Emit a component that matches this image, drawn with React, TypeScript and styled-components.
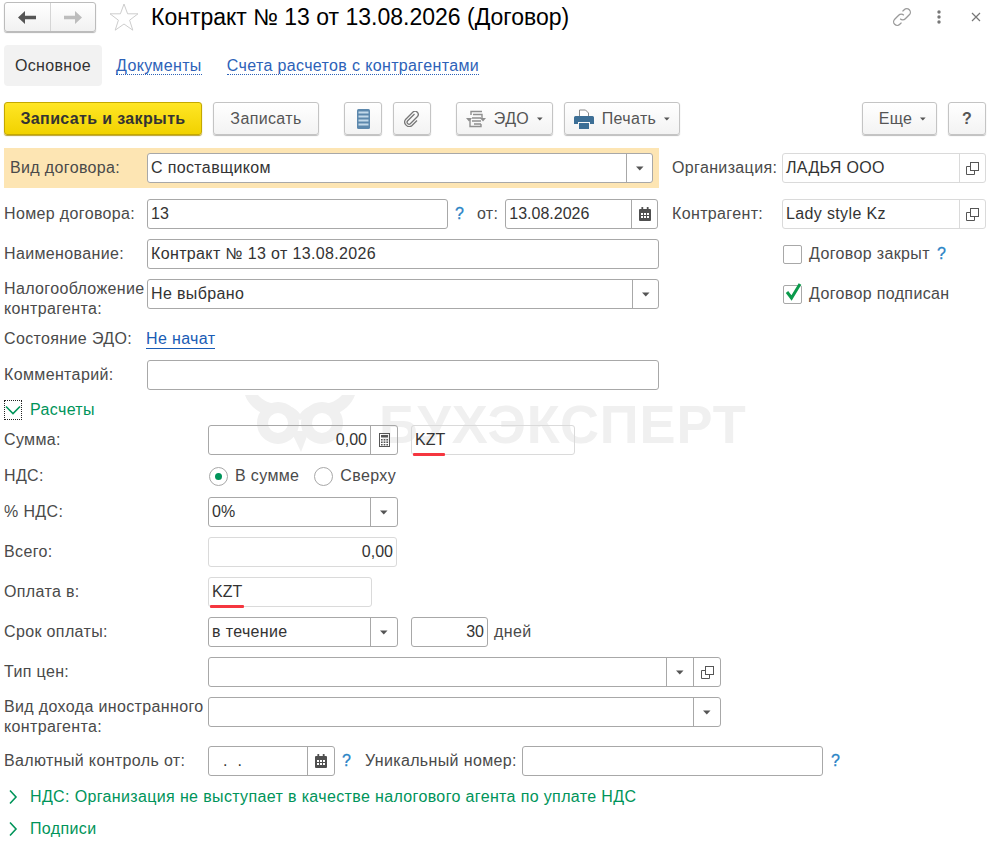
import React from "react";
import styled, { createGlobalStyle } from "styled-components";

const GlobalStyle = createGlobalStyle`
  html, body {
    margin: 0;
    padding: 0;
    background: #fff;
  }
  body {
    font-family: "Liberation Sans", Arial, sans-serif;
    font-size: 16px;
    letter-spacing: 0.36px;
    color: #333;
  }
`;

const Page = styled.div`
  position: relative;
  width: 990px;
  height: 847px;
  overflow: hidden;
  box-sizing: border-box;
  padding: 2px 4px 0;
`;

const Watermark = styled.div`
  position: absolute;
  left: 245px;
  top: 395px;
  display: flex;
  align-items: flex-start;
  gap: 21px;
  color: #f0f0f0;
  font-size: 54px;
  font-weight: 700;
  letter-spacing: 0.9px;
  line-height: 58px;
  white-space: nowrap;
`;

const Content = styled.div`
  position: relative;
  display: flex;
  flex-direction: column;
`;

const TitleBar = styled.header`
  display: flex;
  align-items: center;
  height: 30px;
`;

const NavGroup = styled.div`
  display: flex;
  width: 92px;
  height: 30px;
  box-sizing: border-box;
  border: 1px solid #bcbcbc;
  border-radius: 3px;
  background: linear-gradient(#fff, #f1f1f1);
  box-shadow: 0 1px 1px #b5b5b5;
`;

const NavButton = styled.div<{ $divider?: boolean }>`
  flex: 1;
  display: flex;
  align-items: center;
  justify-content: center;
  border-left: ${(p) => (p.$divider ? "1px solid #d5d5d5" : "none")};
`;

const Title = styled.h1`
  margin: 0 0 0 12px;
  font-size: 23px;
  font-weight: 400;
  letter-spacing: 0;
  color: #000;
  white-space: nowrap;
`;

const TitleActions = styled.div`
  margin-left: auto;
  display: flex;
  align-items: center;
  padding-right: 5px;
`;

const ActionIcon = styled.svg<{ $ml?: number }>`
  display: block;
  margin-left: ${(p) => p.$ml ?? 0}px;
`;

const StarWrap = styled.div`
  margin-left: 13px;
  display: flex;
`;

const Tabs = styled.nav`
  display: flex;
  align-items: center;
  height: 41px;
  margin-top: 13px;
`;

const ActiveTab = styled.div`
  display: flex;
  align-items: center;
  justify-content: center;
  width: 98px;
  height: 41px;
  border-radius: 4px;
  background: #f2f2f2;
  color: #333;
`;

const TabLink = styled.a<{ $gap: number }>`
  margin-left: ${(p) => p.$gap}px;
  color: #2d62b8;
  line-height: 17px;
  border-bottom: 1px dotted #2d62b8;
`;

const Toolbar = styled.div`
  display: flex;
  align-items: stretch;
  height: 33px;
  margin-top: 16px;
`;

const Button = styled.div<{ $w: number; $ml?: number; $pl?: number; $primary?: boolean }>`
  display: flex;
  align-items: center;
  justify-content: center;
  gap: 8px;
  box-sizing: border-box;
  width: ${(p) => p.$w}px;
  margin-left: ${(p) => p.$ml ?? 0}px;
  padding-left: ${(p) => p.$pl ?? 0}px;
  border: 1px solid ${(p) => (p.$primary ? "#c4a800" : "#c4c4c4")};
  border-radius: 3px;
  background: ${(p) =>
    p.$primary ? "linear-gradient(#ffe625, #f1d200)" : "linear-gradient(#fff, #f3f3f3)"};
  box-shadow: 0 1px 1px ${(p) => (p.$primary ? "#b8a030" : "#bdbdbd")};
  color: ${(p) => (p.$primary ? "#333" : "#555")};
  font-weight: ${(p) => (p.$primary ? 700 : 400)};
  white-space: nowrap;
`;

const TopForm = styled.div`
  display: flex;
  margin-top: 13px;
`;

const LeftColumn = styled.div`
  width: 655px;
  display: flex;
  flex-direction: column;
`;

const RightColumn = styled.div`
  margin-left: 13px;
  width: 314px;
  padding-top: 5px;
  display: flex;
  flex-direction: column;
  gap: 10px;
`;

const HighlightRow = styled.div`
  display: flex;
  align-items: center;
  height: 40px;
  padding-left: 6px;
  padding-right: 6px;
  margin-bottom: 11px;
  background: #fde5b3;
`;

const Row = styled.div<{ $h?: number; $mt?: number; $mb?: number }>`
  display: flex;
  align-items: center;
  height: ${(p) => p.$h ?? 30}px;
  margin-top: ${(p) => p.$mt ?? 0}px;
  margin-bottom: ${(p) => p.$mb ?? 10}px;
`;

const Label = styled.div<{ $w: number; $top?: boolean }>`
  flex: none;
  width: ${(p) => p.$w}px;
  color: #4a4a4a;
  line-height: 20px;
  white-space: nowrap;
  align-self: ${(p) => (p.$top ? "flex-start" : "center")};
`;

const Field = styled.div<{
  $w?: number;
  $ml?: number;
  $light?: boolean;
  $grow?: boolean;
  $solid?: boolean;
}>`
  display: flex;
  box-sizing: border-box;
  position: relative;
  height: 30px;
  flex: ${(p) => (p.$grow ? "1" : "none")};
  width: ${(p) => (p.$w ? `${p.$w}px` : "auto")};
  margin-left: ${(p) => p.$ml ?? 0}px;
  border: 1px solid ${(p) => (p.$light ? "#dadada" : "#a8a8a8")};
  border-radius: 3px;
  background: ${(p) => (p.$solid ? "#fff" : "transparent")};
  color: #333;
`;

const FieldText = styled.div<{ $right?: boolean; $pad?: number; $tight?: boolean }>`
  flex: 1;
  min-width: 0;
  padding: 0 ${(p) => (p.$right ? 3 : 0)}px 0 ${(p) => p.$pad ?? 3}px;
  line-height: 27px;
  letter-spacing: ${(p) => (p.$tight ? "0" : "inherit")};
  text-align: ${(p) => (p.$right ? "right" : "left")};
  white-space: nowrap;
`;

const FieldButton = styled.div<{ $light?: boolean; $w?: number }>`
  flex: none;
  width: ${(p) => p.$w ?? 26}px;
  display: flex;
  align-items: center;
  justify-content: center;
  border-left: 1px solid ${(p) => (p.$light ? "#dadada" : "#a8a8a8")};
`;

const RedUnderline = styled.span<{ $w: number }>`
  position: absolute;
  left: 1px;
  bottom: -2px;
  width: ${(p) => p.$w}px;
  height: 3px;
  border-radius: 1px;
  background: #f5363f;
`;

const Help = styled.span<{ $ml: number }>`
  margin-left: ${(p) => p.$ml}px;
  color: #2a84c6;
  font-weight: 400;
  font-size: 16px;
  letter-spacing: 0;
  -webkit-text-stroke: 0.3px #2a84c6;
`;

const Plain = styled.span<{ $ml: number }>`
  margin-left: ${(p) => p.$ml}px;
  color: #4a4a4a;
  white-space: nowrap;
`;

const StatusLink = styled.a`
  color: #1a5cb5;
  line-height: 18px;
  border-bottom: 1px solid #1a5cb5;
`;

const CheckRow = styled.div`
  display: flex;
  align-items: center;
  height: 30px;
  padding-left: 111px;
  color: #4a4a4a;
`;

const CheckBox = styled.div`
  position: relative;
  box-sizing: border-box;
  width: 19px;
  height: 19px;
  margin-right: 7px;
  border: 1px solid #a8a8a8;
  border-radius: 2px;
  background: #fff;
`;

const CheckMark = styled.svg`
  position: absolute;
  left: 1px;
  top: -4px;
`;

const SectionHead = styled.div<{ $mt: number }>`
  display: flex;
  align-items: center;
  height: 20px;
  margin-top: ${(p) => p.$mt}px;
  color: #00945a;
  white-space: nowrap;
`;

const ToggleBox = styled.div<{ $focus?: boolean }>`
  flex: none;
  display: flex;
  align-items: center;
  justify-content: center;
  box-sizing: border-box;
  width: 18px;
  height: 20px;
  margin-right: 8px;
  border: ${(p) => (p.$focus ? "1px dotted #222" : "none")};
`;

const RadioOption = styled.div<{ $ml?: number }>`
  display: flex;
  align-items: center;
  margin-left: ${(p) => p.$ml ?? 0}px;
  color: #4a4a4a;
`;

const RadioCircle = styled.div<{ $on?: boolean }>`
  display: flex;
  align-items: center;
  justify-content: center;
  box-sizing: border-box;
  width: 19px;
  height: 19px;
  margin-right: 7px;
  border: 1px solid #a8a8a8;
  border-radius: 50%;
  &::after {
    content: "";
    display: ${(p) => (p.$on ? "block" : "none")};
    width: 7px;
    height: 7px;
    border-radius: 50%;
    background: #00945a;
  }
`;

const Caret = ({ small }: { small?: boolean }) => (
  <svg width={small ? 6 : 8} height={small ? 4 : 5} viewBox="0 0 8 5">
    <path d="M0 0.5h7.5L3.75 4.5z" fill="#555" />
  </svg>
);

const CopyIcon = () => (
  <svg width="13" height="13" viewBox="0 0 13 13" fill="none" stroke="#555" strokeWidth="1">
    <rect x="4.5" y="0.5" width="8" height="8" />
    <path d="M4.500 4.500H0.500v8h8V8.500" />
  </svg>
);

const CalendarIcon = () => (
  <svg width="12" height="14" viewBox="0 0 12 14">
    <path d="M1 2h10a1 1 0 0 1 1 1v10a1 1 0 0 1-1 1H1a1 1 0 0 1-1-1V3a1 1 0 0 1 1-1z" fill="#4f4f4f" />
    <rect x="2.4" y="0" width="1.8" height="3.4" rx=".6" fill="#4f4f4f" />
    <rect x="7.8" y="0" width="1.8" height="3.4" rx=".6" fill="#4f4f4f" />
    <path
      d="M2 6h2v2H2zM5 6h2v2H5zM8 6h2v2H8zM2 9h2v2H2zM5 9h2v2H5zM8 9h2v2H8z"
      fill="#fff"
    />
  </svg>
);

const CalcIcon = () => (
  <svg width="11" height="14" viewBox="0 0 11 14">
    <rect x=".5" y=".5" width="10" height="13" fill="none" stroke="#555" />
    <rect x="2" y="2" width="7" height="2.5" fill="#555" />
    <path d="M2 6h1.600v1.500H2zM4.700 6h1.600v1.500H4.700zM7.400 6H9v1.500H7.400zM2 8.500h1.600V10H2zM4.700 8.500h1.600V10H4.700zM7.400 8.500H9V10H7.400zM2 11h1.600v1.500H2zM4.700 11h1.600v1.500H4.700zM7.400 11H9v1.500H7.400z" fill="#555" />
  </svg>
);

const ChevronRight = () => (
  <svg width="10" height="16" viewBox="0 0 10 16" fill="none" stroke="#00945a" strokeWidth="1.6">
    <path d="M2 1.500L8 8l-6 6.500" />
  </svg>
);

const ChevronDown = () => (
  <svg width="16" height="10" viewBox="0 0 16 10" fill="none" stroke="#00945a" strokeWidth="1.6">
    <path d="M1 1.500L8 8.500l7-7" />
  </svg>
);

const OwlLogo = () => (
  <svg width="113" height="58" viewBox="0 0 113 58" fill="#f0f0f0">
    <path d="M0 0h13c4 5 12 9 20 9 9 0 17 3 22 10 5-7 13-10 22-10 8 0 16-4 20-9h13c-3 9-12 17-20 19-2 0-9-10-35 6C29 9 22 19 20 19 12 17 3 9 0 0z" />
    <circle cx="33" cy="28" r="15.5" fill="none" stroke="#f0f0f0" strokeWidth="11" />
    <circle cx="77" cy="28" r="15.5" fill="none" stroke="#f0f0f0" strokeWidth="11" />
    <path d="M46 36h18l-8 21z" />
  </svg>
);

const App = () => (
  <>
    <GlobalStyle />
    <Page>
      <Watermark>
        <OwlLogo />
        <span>БУХЭКСПЕРТ</span>
      </Watermark>
      <Content>
        <TitleBar>
          <NavGroup>
            <NavButton>
              <svg width="18" height="13" viewBox="0 0 18 13">
                <path d="M7 0v4.800h11v3.400H7V13L0 6.500z" fill="#555" />
              </svg>
            </NavButton>
            <NavButton $divider>
              <svg width="18" height="13" viewBox="0 0 18 13">
                <path d="M11 0v4.800H0v3.400h11V13l7-6.500z" fill="#bdbdbd" />
              </svg>
            </NavButton>
          </NavGroup>
          <StarWrap>
            <svg width="30" height="28" viewBox="0 0 30 28" fill="none" stroke="#cdcdcd">
              <path d="M15 1l3.600 9.800H29l-8.400 6.400 3.200 10L15 21l-8.800 6.200 3.200-10L1 10.800h10.400z" />
            </svg>
          </StarWrap>
          <Title>Контракт № 13 от 13.08.2026 (Договор)</Title>
          <TitleActions>
            <ActionIcon width="20" height="20" viewBox="0 0 20 20" fill="none" stroke="#9a9a9a" strokeWidth="1.3">
              <path d="M8.200 11.800a3.600 3.600 0 0 0 5.100 0l4-4a3.600 3.600 0 0 0-5.100-5.100L10.500 4.400" />
              <path d="M11.800 8.200a3.600 3.600 0 0 0-5.100 0l-4 4a3.600 3.600 0 0 0 5.100 5.100l1.700-1.700" />
            </ActionIcon>
            <ActionIcon $ml={25} width="4" height="14" viewBox="0 0 4 14" fill="#777">
              <circle cx="2" cy="2" r="1.700" />
              <circle cx="2" cy="7" r="1.700" />
              <circle cx="2" cy="12" r="1.700" />
            </ActionIcon>
            <ActionIcon $ml={30} width="10" height="10" viewBox="0 0 10 10" fill="none" stroke="#777" strokeWidth="1.2">
              <path d="M1 1l8 8M9 1l-8 8" />
            </ActionIcon>
          </TitleActions>
        </TitleBar>

        <Tabs>
          <ActiveTab>Основное</ActiveTab>
          <TabLink $gap={14}>Документы</TabLink>
          <TabLink $gap={25}>Счета расчетов с контрагентами</TabLink>
        </Tabs>

        <Toolbar>
          <Button $w={198} $primary>Записать и закрыть</Button>
          <Button $w={106} $ml={11}>Записать</Button>
          <Button $w={38} $ml={25}>
            <svg width="13" height="20" viewBox="0 0 13 20">
              <rect x="0" y="0" width="13" height="20" rx="1.500" fill="#5c88ad" />
              <path d="M1.500 2.500h10v2h-10zM1.500 6.500h10v2h-10zM1.500 10.500h10v2h-10zM1.500 14.500h10v2h-10z" fill="#c3d9ea" />
            </svg>
          </Button>
          <Button $w={38} $ml={11}>
            <svg width="16" height="16" viewBox="0 0 16 16" fill="none" stroke="#777" strokeWidth="1.300">
              <path d="M10.500 3L3.500 10a2 2 0 0 0 2.800 2.800l7.200-7.300a3.200 3.200 0 0 0-4.500-4.500L1.800 8.200a4.400 4.400 0 0 0 6.200 6.200L13 9.500" />
            </svg>
          </Button>
          <Button $w={97} $ml={25}>
            <svg width="20" height="18" viewBox="0 0 20 18" fill="none" stroke="#8f8f8f" strokeWidth="1.400">
              <path d="M5 5V1.500h11M7 4.500h9V8M6 8h9M6 11h9M4 8v8.500h11V14M8 14h7" />
              <path d="M0 8h6L3 11.500zM14 8h6l-3 3.500z" fill="#8f8f8f" stroke="none" />
            </svg>
            <span>ЭДО</span>
            <Caret small />
          </Button>
          <Button $w={116} $ml={11}>
            <svg width="20" height="20" viewBox="0 0 20 20">
              <path d="M5.500 1h6l3 3v4h-9z" fill="#fff" stroke="#8a8a8a" />
              <path d="M1.500 7h17A1.500 1.500 0 0 1 20 8.500V15h-4v-2H4v2H0V8.500A1.500 1.500 0 0 1 1.500 7z" fill="#3d6f96" />
              <rect x="5" y="14" width="10" height="6" fill="#3d6f96" />
            </svg>
            <span>Печать</span>
            <Caret small />
          </Button>
          <Button $w={75} $ml={182} $pl={6}>
            <span>Еще</span>
            <Caret small />
          </Button>
          <Button $w={38} $ml={11}>
            <strong>?</strong>
          </Button>
        </Toolbar>

        <TopForm>
          <LeftColumn>
            <HighlightRow>
              <Label $w={137}>Вид договора:</Label>
              <Field $grow $solid>
                <FieldText>С поставщиком</FieldText>
                <FieldButton $w={25}><Caret /></FieldButton>
              </Field>
            </HighlightRow>
            <Row>
              <Label $w={143}>Номер договора:</Label>
              <Field $w={301}><FieldText $tight>13</FieldText></Field>
              <Help $ml={7}>?</Help>
              <Plain $ml={13}>от:</Plain>
              <Field $w={153} $ml={7}>
                <FieldText $tight>13.08.2026</FieldText>
                <FieldButton $w={25}><CalendarIcon /></FieldButton>
              </Field>
            </Row>
            <Row>
              <Label $w={143}>Наименование:</Label>
              <Field $grow><FieldText>Контракт № 13 от 13.08.2026</FieldText></Field>
            </Row>
            <Row $mb={15}>
              <Label $w={143} $top>Налогообложение<br />контрагента:</Label>
              <Field $grow>
                <FieldText>Не выбрано</FieldText>
                <FieldButton $w={25}><Caret /></FieldButton>
              </Field>
            </Row>
            <Row $mb={6}>
              <Label $w={142}>Состояние ЭДО:</Label>
              <StatusLink>Не начат</StatusLink>
            </Row>
            <Row $mb={0}>
              <Label $w={143}>Комментарий:</Label>
              <Field $grow><FieldText /></Field>
            </Row>
          </LeftColumn>

          <RightColumn>
            <Row $mb={6}>
              <Label $w={110}>Организация:</Label>
              <Field $grow $light>
                <FieldText>ЛАДЬЯ ООО</FieldText>
                <FieldButton $light $w={25}><CopyIcon /></FieldButton>
              </Field>
            </Row>
            <Row $mb={0}>
              <Label $w={110}>Контрагент:</Label>
              <Field $grow $light>
                <FieldText>Lady style Kz</FieldText>
                <FieldButton $light $w={25}><CopyIcon /></FieldButton>
              </Field>
            </Row>
            <CheckRow>
              <CheckBox />
              Договор закрыт
              <Help $ml={7}>?</Help>
            </CheckRow>
            <CheckRow>
              <CheckBox>
                <CheckMark width="18" height="20" viewBox="0 0 18 20" fill="none" stroke="#0b9a4b" strokeWidth="3">
                  <path d="M2 10l4.500 6L15 2" />
                </CheckMark>
              </CheckBox>
              Договор подписан
            </CheckRow>
          </RightColumn>
        </TopForm>

        <SectionHead $mt={10}>
          <ToggleBox $focus><ChevronDown /></ToggleBox>
          Расчеты
        </SectionHead>

        <Row $mt={5}>
          <Label $w={204}>Сумма:</Label>
          <Field $w={190}>
            <FieldText $right $tight>0,00</FieldText>
            <FieldButton><CalcIcon /></FieldButton>
          </Field>
          <Field $w={164} $ml={13} $light>
            <FieldText $tight>KZT</FieldText>
            <RedUnderline $w={32} />
          </Field>
        </Row>
        <Row $h={22}>
          <Label $w={205}>НДС:</Label>
          <RadioOption>
            <RadioCircle $on />
            В сумме
          </RadioOption>
          <RadioOption $ml={15}>
            <RadioCircle />
            Сверху
          </RadioOption>
        </Row>
        <Row>
          <Label $w={204}>% НДС:</Label>
          <Field $w={190}>
            <FieldText $tight>0%</FieldText>
            <FieldButton><Caret /></FieldButton>
          </Field>
        </Row>
        <Row>
          <Label $w={204}>Всего:</Label>
          <Field $w={189} $light><FieldText $right $tight>0,00</FieldText></Field>
        </Row>
        <Row>
          <Label $w={204}>Оплата в:</Label>
          <Field $w={164} $light>
            <FieldText $tight>KZT</FieldText>
            <RedUnderline $w={34} />
          </Field>
        </Row>
        <Row>
          <Label $w={204}>Срок оплаты:</Label>
          <Field $w={190}>
            <FieldText>в течение</FieldText>
            <FieldButton><Caret /></FieldButton>
          </Field>
          <Field $w={77} $ml={13}><FieldText $right $tight>30</FieldText></Field>
          <Plain $ml={6}>дней</Plain>
        </Row>
        <Row>
          <Label $w={204}>Тип цен:</Label>
          <Field $w={513}>
            <FieldText />
            <FieldButton><Caret /></FieldButton>
            <FieldButton><CopyIcon /></FieldButton>
          </Field>
        </Row>
        <Row $mb={19}>
          <Label $w={204} $top>Вид дохода иностранного<br />контрагента:</Label>
          <Field $w={513}>
            <FieldText />
            <FieldButton><Caret /></FieldButton>
          </Field>
        </Row>
        <Row $mb={0}>
          <Label $w={204}>Валютный контроль от:</Label>
          <Field $w={127}>
            <FieldText $pad={14}>. &nbsp;.</FieldText>
            <FieldButton><CalendarIcon /></FieldButton>
          </Field>
          <Help $ml={7}>?</Help>
          <Plain $ml={14}>Уникальный номер:</Plain>
          <Field $w={301} $ml={5}><FieldText /></Field>
          <Help $ml={8}>?</Help>
        </Row>

        <SectionHead $mt={11}>
          <ToggleBox><ChevronRight /></ToggleBox>
          НДС: Организация не выступает в качестве налогового агента по уплате НДС
        </SectionHead>
        <SectionHead $mt={12}>
          <ToggleBox><ChevronRight /></ToggleBox>
          Подписи
        </SectionHead>
      </Content>
    </Page>
  </>
);

export default App;
